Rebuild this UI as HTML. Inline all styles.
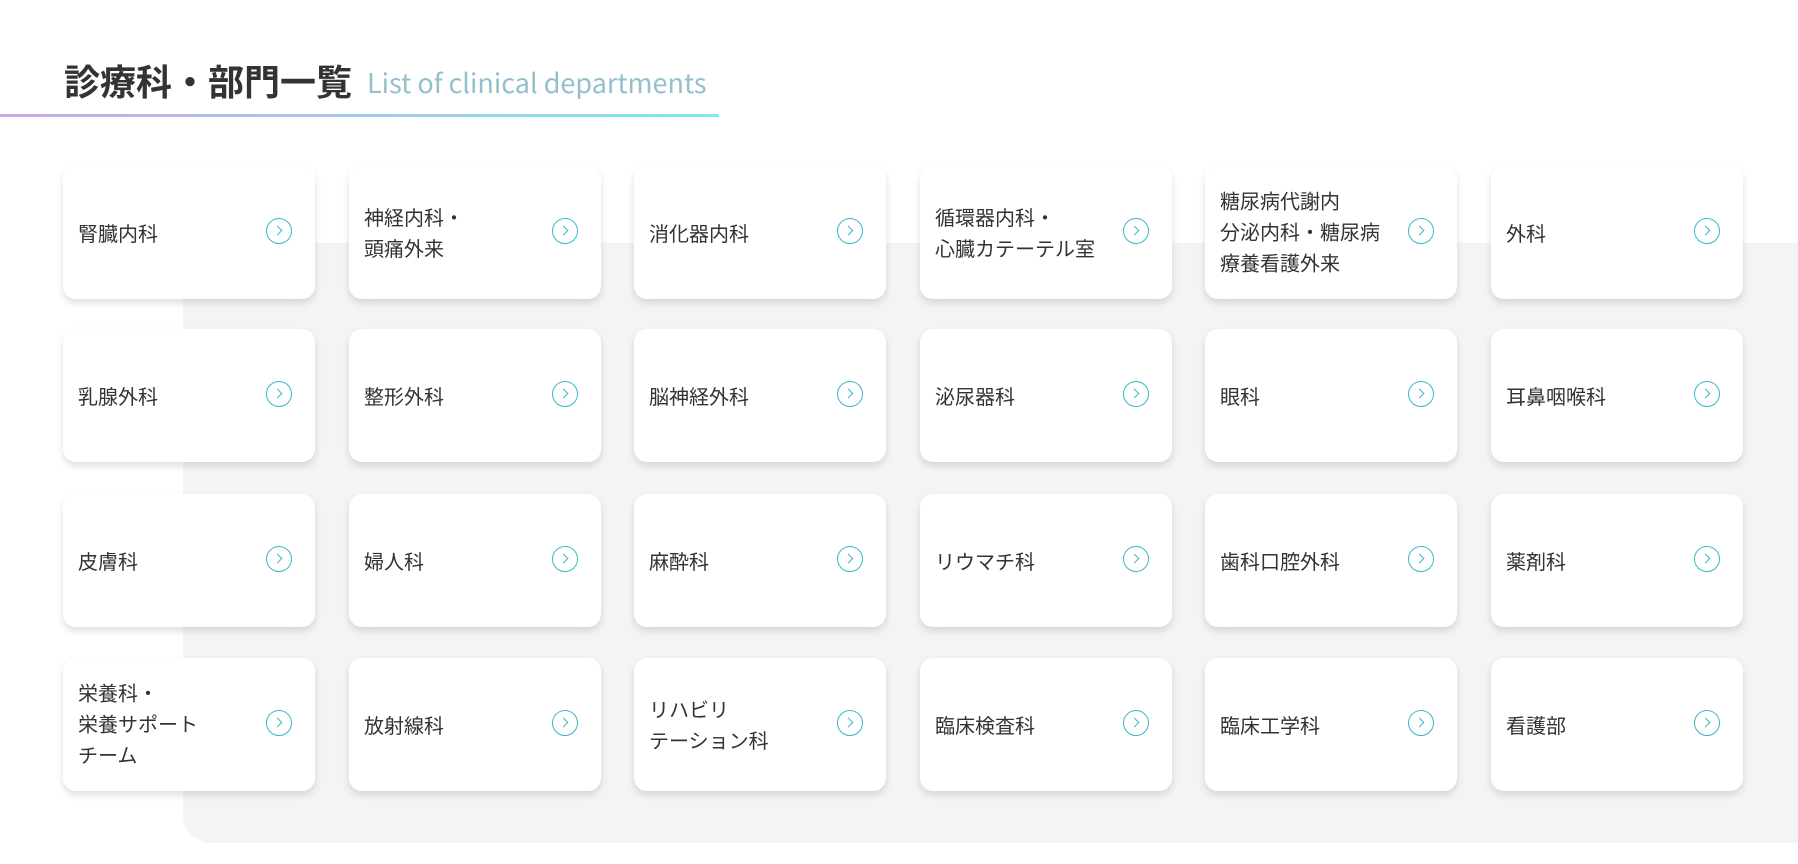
<!DOCTYPE html>
<html><head><meta charset="utf-8"><style>
body{margin:0;width:1798px;height:864px;background:#fff;position:relative;overflow:hidden;font-family:"Liberation Sans","Noto Sans CJK JP",sans-serif;}
.t{position:absolute;left:64px;top:54px;font-size:36px;font-weight:bold;color:#333;font-family:"Noto Sans CJK JP",sans-serif;}
.e{position:absolute;left:367px;top:62px;font-size:27px;color:#94c0cc;font-family:"Noto Sans CJK JP","Liberation Sans",sans-serif;}
.line{position:absolute;left:0;top:114px;width:719px;height:3px;background:linear-gradient(90deg,#c8a8ef,#7fe8f4);}
.bg{position:absolute;left:183px;top:243px;width:1640px;height:600px;background:#f3f5f5;border-bottom-left-radius:28px;}
.c{position:absolute;width:252px;height:133px;background:#fff;border-radius:13px;box-shadow:0 4px 8px rgba(0,0,0,0.13);}
.c span{position:absolute;left:15px;top:50%;transform:translateY(-52%);font-size:20px;line-height:31px;color:#333;font-family:"Noto Sans CJK JP",sans-serif;}
.c i{position:absolute;left:203px;top:52px;width:24px;height:24px;border:1.3px solid #3bb8c9;border-radius:50%;}
.c i:after{content:"";position:absolute;left:7px;top:8px;width:6px;height:6px;border-top:1.2px solid #3bb8c9;border-right:1.2px solid #3bb8c9;transform:rotate(45deg);}
</style></head><body>
<div class="t">診療科・部門一覧</div>
<div class="e">List of clinical departments</div>
<div class="line"></div>
<div class="bg"></div>
<div class="c" style="left:63px;top:166px"><span>腎臓内科</span><i></i></div>
<div class="c" style="left:349px;top:166px"><span>神経内科・<br>頭痛外来</span><i></i></div>
<div class="c" style="left:634px;top:166px"><span>消化器内科</span><i></i></div>
<div class="c" style="left:920px;top:166px"><span>循環器内科・<br>心臓カテーテル室</span><i></i></div>
<div class="c" style="left:1205px;top:166px"><span>糖尿病代謝内<br>分泌内科・糖尿病<br>療養看護外来</span><i></i></div>
<div class="c" style="left:1491px;top:166px"><span>外科</span><i></i></div>
<div class="c" style="left:63px;top:329px"><span>乳腺外科</span><i></i></div>
<div class="c" style="left:349px;top:329px"><span>整形外科</span><i></i></div>
<div class="c" style="left:634px;top:329px"><span>脳神経外科</span><i></i></div>
<div class="c" style="left:920px;top:329px"><span>泌尿器科</span><i></i></div>
<div class="c" style="left:1205px;top:329px"><span>眼科</span><i></i></div>
<div class="c" style="left:1491px;top:329px"><span>耳鼻咽喉科</span><i></i></div>
<div class="c" style="left:63px;top:494px"><span>皮膚科</span><i></i></div>
<div class="c" style="left:349px;top:494px"><span>婦人科</span><i></i></div>
<div class="c" style="left:634px;top:494px"><span>麻酔科</span><i></i></div>
<div class="c" style="left:920px;top:494px"><span>リウマチ科</span><i></i></div>
<div class="c" style="left:1205px;top:494px"><span>歯科口腔外科</span><i></i></div>
<div class="c" style="left:1491px;top:494px"><span>薬剤科</span><i></i></div>
<div class="c" style="left:63px;top:658px"><span>栄養科・<br>栄養サポート<br>チーム</span><i></i></div>
<div class="c" style="left:349px;top:658px"><span>放射線科</span><i></i></div>
<div class="c" style="left:634px;top:658px"><span>リハビリ<br>テーション科</span><i></i></div>
<div class="c" style="left:920px;top:658px"><span>臨床検査科</span><i></i></div>
<div class="c" style="left:1205px;top:658px"><span>臨床工学科</span><i></i></div>
<div class="c" style="left:1491px;top:658px"><span>看護部</span><i></i></div>
</body></html>
